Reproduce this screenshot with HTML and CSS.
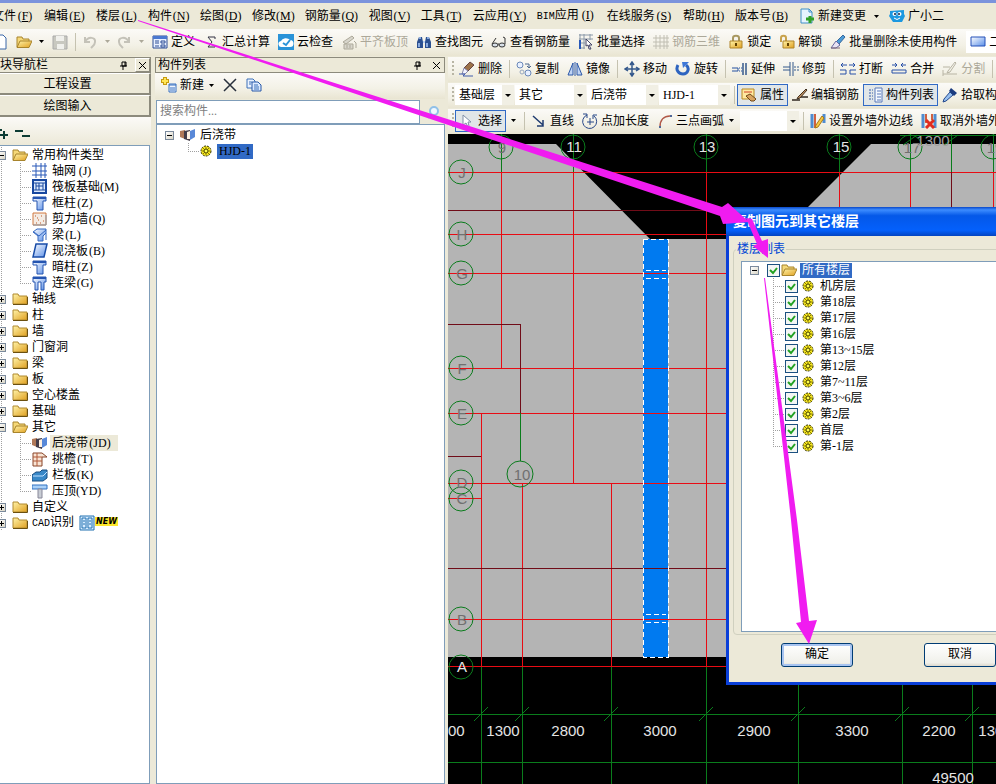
FILE: index.html
```html
<!DOCTYPE html>
<html lang="zh-CN">
<head>
    <meta charset="UTF-8">
    <meta name="viewport" content="width=device-width, initial-scale=1.0">
    <title>复制图元到其它楼层</title>
    <link rel="stylesheet" href="styles.css">
</head>
<body>
    <!-- icon set -->
    <svg class="sprite" aria-hidden="true">
        <defs>
            <linearGradient id="gold" x1="0" y1="0" x2="1" y2="1"><stop offset="0" stop-color="#fff3a8"/><stop offset="1" stop-color="#e0a020"/></linearGradient>
            <linearGradient id="steel" x1="0" y1="0" x2="1" y2="1"><stop offset="0" stop-color="#fff"/><stop offset="1" stop-color="#5a8fe8"/></linearGradient>
        </defs>
        <symbol id="i-doc" viewBox="0 0 16 16"><path d="M3 1h8l3 3v11H3z" fill="#fff" stroke="#3a66a8"/></symbol>
        <symbol id="i-open" viewBox="0 0 16 16"><path d="M1 13V3h5l1 2h6v3" fill="#f5d878" stroke="#a8842c"/><path d="M1 13.500L4 7h12l-3 6.500z" fill="url(#gold)" stroke="#a8842c"/></symbol>
        <symbol id="i-folder" viewBox="0 0 16 16"><path d="M1 13V3h5l1 2h8v8z" fill="url(#gold)" stroke="#b08a30"/><path d="M1 13.500h14.500V6" fill="none" stroke="#6b5010"/></symbol>
        <symbol id="i-save" viewBox="0 0 16 16"><path d="M1 2h14v13H1z" fill="#c8c8c0" stroke="#aaa"/><path d="M4 2h8v5H4zM5 10h7v5H5z" fill="#f0f0ec"/></symbol>
        <symbol id="i-undo" viewBox="0 0 16 16"><path d="M3 3v5h5M3 8c3-6 11-5 10 0c0 3-2 4-4 6" fill="none" stroke="#c4c2b8" stroke-width="2"/></symbol>
        <symbol id="i-redo" viewBox="0 0 16 16"><path d="M13 3v5H8M13 8C10 2 2 3 3 8c0 3 2 4 4 6" fill="none" stroke="#c4c2b8" stroke-width="2"/></symbol>
        <symbol id="i-define" viewBox="0 0 16 16"><path d="M1 2h14v12H1z" fill="#e8f0ff" stroke="#2c4c94"/><path d="M1 2h14v3H1z" fill="#4a78d0"/><path d="M3 7h4M3 9h4M3 12h4M9 7h4v2H9zM9 11h4v2H9z" fill="none" stroke="#2c4c94"/></symbol>
        <symbol id="i-sum" viewBox="0 0 16 16"><path d="M12 5V3H5l4 5l-4 5h7v-2" fill="none" stroke="#334"/></symbol>
        <symbol id="i-cloud" viewBox="0 0 16 16"><path d="M0 0h16v16H0z" fill="#2a93d8"/><path d="M4 13a3 3 0 0 1-1-6a5 4 0 0 1 9-1a3.500 3.500 0 0 1 0 7z" fill="#fff"/><path d="M5 9l3 2l4-5" fill="none" stroke="#2a93d8" stroke-width="2"/></symbol>
        <symbol id="i-flat" viewBox="0 0 16 16"><path d="M2 8l9-6l2 2l-8 6zM3 10h9v5H3z" fill="#d8d6cc" stroke="#aca899"/><path d="M6 11v3M9 11v3M13 7l2 2v5" stroke="#aca899" fill="none"/></symbol>
        <symbol id="i-find" viewBox="0 0 16 16"><path d="M1 14V8l2-5h3l1 5v6zM9 14V8l1-5h3l2 5v6z" fill="#2c5090"/><path d="M3 4h2M11 4h2M7 8h2M3 9v4M11 9v4" stroke="#a8c8f8" stroke-width="1.500"/></symbol>
        <symbol id="i-glasses" viewBox="0 0 16 16"><ellipse cx="4" cy="11" rx="3" ry="2" fill="#d8e0e8" stroke="#333"/><ellipse cx="11" cy="11" rx="3" ry="2" fill="#d8e0e8" stroke="#333"/><path d="M7 10h1M1 10l4-6M14 10V4l-2-1" fill="none" stroke="#333"/></symbol>
        <symbol id="i-batch" viewBox="0 0 16 16"><path d="M1 1h14M1 5h14M1 9h6M1 14h6M2 0v15M6 0v15M12 0v6" stroke="#8a98a8" fill="none"/><path d="M2 6v9" stroke="#2858b8" stroke-width="2"/><path d="M8 5l6 6h-3l2 4h-2l-1-4l-2 1z" fill="#fff" stroke="#446"/></symbol>
        <symbol id="i-rebar3d" viewBox="0 0 16 16"><path d="M0 4h16M0 8h16M0 12h16M3 1v14M7 1v14M11 1v14M14 1v14" stroke="#c0beb2" fill="none"/></symbol>
        <symbol id="i-lock" viewBox="0 0 16 16"><path d="M5 8V4c0-3 6-3 6 0v4" fill="none" stroke="#a89860" stroke-width="2"/><path d="M2 7h12v7H2z" fill="url(#gold)" stroke="#b08428"/><path d="M8 9v3" stroke="#604000" stroke-width="2"/></symbol>
        <symbol id="i-unlock" viewBox="0 0 16 16"><path d="M2 8V4c0-3 5-3 5 0v4" fill="none" stroke="#c8a24c" stroke-width="2"/><path d="M4 7h11v7H4z" fill="url(#gold)" stroke="#b08428"/><path d="M9 9v3" stroke="#604000" stroke-width="2"/></symbol>
        <symbol id="i-brush" viewBox="0 0 16 16"><path d="M13 1l2 2l-6 7l-3-2z" fill="#4c9cd8" stroke="#38689c"/><path d="M6 7l4 4l-4 3H1z" fill="#e8e4f4" stroke="#6868a0"/><path d="M1 14h9" stroke="#806878"/></symbol>
        <symbol id="i-eraser" viewBox="0 0 16 16"><path d="M11 1l4 3l-6 6l-4-3z" fill="#9c7248" stroke="#644"/><path d="M5 7l4 3l-3 3H3z" fill="#f4f4ff" stroke="#88a"/><path d="M0 13h6l-2 2h10" stroke="#405cac" fill="none"/></symbol>
        <symbol id="i-2d" viewBox="0 0 16 16"><path d="M1 3h14v9H1z" fill="url(#steel)" stroke="#2450b8"/></symbol>
        <symbol id="i-change" viewBox="0 0 16 16"><path d="M2 1h8l3 3v11H2z" fill="#e6f4ff" stroke="#4090c8"/><path d="M10 1v3h3" fill="none" stroke="#4090c8"/><path d="M11 8v7M7 11h8" stroke="#30a028" stroke-width="3"/></symbol>
        <symbol id="i-mascot" viewBox="0 0 16 16"><path d="M1 3l14-1v4l1 2l-3 6H4L0 8l1-2z" fill="#1c98e0"/><circle cx="5.500" cy="6" r="2" fill="#fff"/><circle cx="10.500" cy="6" r="2" fill="#fff"/><circle cx="6" cy="6" r="1" fill="#124"/><circle cx="10" cy="6" r="1" fill="#124"/><path d="M5 10q3 3 6 0" fill="none" stroke="#fff"/></symbol>
        <symbol id="i-copy" viewBox="0 0 16 16"><circle cx="4" cy="4" r="3" fill="#e8f0ff" stroke="#6a88b8"/><circle cx="12" cy="12" r="3" fill="#e8f0ff" stroke="#6a88b8"/><circle cx="6" cy="11" r="2" fill="none" stroke="#98a8c0"/><path d="M9 3h4v4M11 5l2 2l2-2" fill="none" stroke="#4c6890"/></symbol>
        <symbol id="i-mirror" viewBox="0 0 16 16"><path d="M6 2v12H1zM10 2v12h5z" fill="#c0d4f4" stroke="#2c58a8"/><path d="M8 1v14" stroke="#2c58a8"/></symbol>
        <symbol id="i-move" viewBox="0 0 16 16"><path d="M8 2v12M2 8h12M6 4l2-3l2 3M6 12l2 3l2-3M4 6L1 8l3 2M12 6l3 2l-3 2" fill="none" stroke="#34588c" stroke-width="1.500"/></symbol>
        <symbol id="i-rotate" viewBox="0 0 16 16"><path d="M3 4c-3 5 1 9 5 9c5 0 7-6 3-9" fill="none" stroke="#2e64c0" stroke-width="3"/><path d="M7 1h7L8 7z" fill="#3e78d8"/></symbol>
        <symbol id="i-extend" viewBox="0 0 16 16"><path d="M0 7h6v3H0" fill="none" stroke="#2450a0"/><path d="M7 7h4M7 10h4" stroke="#2450a0" stroke-dasharray="1 1"/><path d="M11 2v12M14 2v12" stroke="#34588c" stroke-width="1.500"/></symbol>
        <symbol id="i-trim" viewBox="0 0 16 16"><path d="M0 6h7M0 9h7M7 1v14M10 1v14" stroke="#34588c"/><path d="M11 6h5M11 9h5" stroke="#34588c" stroke-dasharray="2 1"/></symbol>
        <symbol id="i-break" viewBox="0 0 16 16"><path d="M1 4h6M9 4h6M3 2L1 4l2 2M13 2l2 2l-2 2M0 9h6v4H0M16 9h-6v4h6" fill="none" stroke="#2850a8"/></symbol>
        <symbol id="i-merge" viewBox="0 0 16 16"><path d="M1 4h5M10 4h5M4 2l2 2l-2 2M12 2l-2 2l2 2M1 9h14v3H1z" fill="none" stroke="#2850a8"/></symbol>
        <symbol id="i-split" viewBox="0 0 16 16"><path d="M1 6h7M1 13h14M1 9v6M13 1L6 10l-1 2l3-1l6-9z" fill="none" stroke="#b8b4a4"/></symbol>
        <symbol id="i-prop" viewBox="0 0 16 16"><path d="M1 2h12v10H1z" fill="#ffe9a0" stroke="#b88820"/><path d="M3 5h8" stroke="#d04028"/><path d="M5 9l4-2l6 5l-2 2h-3z" fill="#d8a460" stroke="#704818"/></symbol>
        <symbol id="i-rebar" viewBox="0 0 16 16"><path d="M0 13h8M6 10h10" stroke="#302820" stroke-width="1.500"/><path d="M14 2L6 10l-1 2l3-1l7-8z" fill="#c09060" stroke="#403020"/></symbol>
        <symbol id="i-list" viewBox="0 0 16 16"><path d="M2 3h4M2 6h4M2 9h4M2 12h4" stroke="#345cac" stroke-dasharray="2 1"/><path d="M8 1h7v14H8z" fill="#f4f8ff" stroke="#5878b8"/><path d="M10 4h4M10 7h4M10 10h4M10 13h4" stroke="#5878b8"/></symbol>
        <symbol id="i-pick" viewBox="0 0 16 16"><path d="M9 1l6 5l-3 3l-5-5z" fill="#1c3c80"/><path d="M8 5l3 3l-7 6l-3 1l1-3z" fill="#98c0f0" stroke="#24488c"/></symbol>
        <symbol id="i-select" viewBox="0 0 16 16"><path d="M4 2v10l3-2l2 4l1-1l-1-4h3z" fill="#fff" stroke="#8090a8"/></symbol>
        <symbol id="i-line" viewBox="0 0 16 16"><path d="M2 3l10 9M12 7v6H6" fill="none" stroke="#203c70" stroke-width="1.500"/></symbol>
        <symbol id="i-point" viewBox="0 0 16 16"><path d="M5 2A7 7 0 1 0 12 3M8 5v7M5 9h7M1 1h4v4M15 2h-4v4" fill="none" stroke="#284888"/></symbol>
        <symbol id="i-arc" viewBox="0 0 16 16"><path d="M3 14C3 7 7 3 13 3" fill="none" stroke="#b05848" stroke-width="1.500"/><path d="M2 13h2v2H2zM13 2h2v2h-2z" fill="#506898"/></symbol>
        <symbol id="i-wallset" viewBox="0 0 16 16"><path d="M2 1v14M14 1v9" stroke="#508cd0" stroke-width="3"/><path d="M5 1v14" stroke="#d06040" stroke-width="2"/><path d="M6 12l6-9l2 2l-6 9l-3 1z" fill="#f8c840" stroke="#a87818"/></symbol>
        <symbol id="i-walldel" viewBox="0 0 16 16"><path d="M2 1v14M14 1v14" stroke="#508cd0" stroke-width="3"/><path d="M5 1v9M11 1v6" stroke="#d06040" stroke-width="2"/><path d="M5 7l8 8M13 7l-8 8" stroke="#e02c20" stroke-width="3"/></symbol>
        <symbol id="i-new" viewBox="0 0 16 16"><path d="M4 0v8M0 4h8" stroke="#c89c10" stroke-width="4"/><path d="M4 1v6M1 4h6" stroke="#ffe658" stroke-width="2"/><path d="M8 7h7v8H8z" fill="#f0f6ff" stroke="#3870c0"/><path d="M8 8h7M9 11h5M9 13h5" stroke="#3870c0"/></symbol>
        <symbol id="i-delete" viewBox="0 0 16 16"><path d="M2 2l12 12M14 2L2 14" stroke="#28303c" stroke-width="1.500"/></symbol>
        <symbol id="i-dup" viewBox="0 0 16 16"><path d="M1 2h6l2 2v7H1z" fill="#eaf2ff" stroke="#3c70b8"/><path d="M6 5h6l3 3v6H6z" fill="#dceaff" stroke="#2858a8"/><path d="M8 8h4M8 10h5M8 12h5M3 5h3M3 7h2" stroke="#3c70b8"/></symbol>
        <symbol id="i-axis" viewBox="0 0 16 16"><path d="M0 3h15M0 8h15M0 12h15M4 0v15M9 0v15M13 0v15" stroke="#2858b8"/></symbol>
        <symbol id="i-raft" viewBox="0 0 16 16"><path d="M1 1h13v13H1z" fill="#dce9fc" stroke="#1848a0" stroke-width="2"/><path d="M4 4h7v7H4zM4 7h7M7 4v7M1 4h3M1 11h3M11 4h3M11 11h3" fill="none" stroke="#1848a0"/></symbol>
        <symbol id="i-column" viewBox="0 0 16 16"><path d="M1 2h13v4h-3v9H5V6H1z" fill="url(#steel)" stroke="#2454b0"/><path d="M1 3h13" stroke="#2454b0" stroke-width="2"/></symbol>
        <symbol id="i-shear" viewBox="0 0 16 16"><path d="M1 2h13v12H1z" fill="#f4ece4" stroke="#d07840"/><path d="M3 5h1M6 9h1M9 5h1M11 10h1M4 12h1M8 12h1M5 7h1" stroke="#c05828"/><path d="M1 14h13V4" fill="none" stroke="#8898a8"/></symbol>
        <symbol id="i-beam" viewBox="0 0 16 16"><path d="M1 5l4-3h9v4l-3 3v5H6V9z" fill="url(#steel)" stroke="#3468c0"/><path d="M2 5l5 4l7-6M11 9l3-3v7" fill="none" stroke="#3468c0"/></symbol>
        <symbol id="i-slab" viewBox="0 0 16 16"><path d="M4 1h11l-3 13H1z" fill="url(#steel)" stroke="#184ca8" stroke-width="1.500"/></symbol>
        <symbol id="i-link" viewBox="0 0 16 16"><path d="M1 2h13v5h-2v8H9V7H6v8H3V7H1z" fill="url(#steel)" stroke="#2454b0"/><path d="M1 3h13" stroke="#2454b0" stroke-width="2"/></symbol>
        <symbol id="i-strip" viewBox="0 0 16 16"><path d="M0 4l5-1v9l-5-2z" fill="#b07858"/><path d="M4 4l6-1v11l-6-2z" fill="#443c48"/><path d="M7 5l3-1v8H7z" fill="#fff0e0"/><path d="M10 4l5-2v8l-5 3z" fill="#5888d8"/></symbol>
        <symbol id="i-eave" viewBox="0 0 16 16"><path d="M1 2h9l5 4h-5v9H1z" fill="#f8e4d4" stroke="#884428"/><path d="M1 6h9M1 10h9M5 2v13" stroke="#b05838"/></symbol>
        <symbol id="i-rail" viewBox="0 0 16 16"><path d="M0 8l4-3h4l2-2h5v8l-4 3H0z" fill="#3888c8" stroke="#184c80"/><path d="M1 9h10l4-4" fill="none" stroke="#c0e0ff"/></symbol>
        <symbol id="i-cap" viewBox="0 0 16 16"><path d="M0 2h15v4H0z" fill="#a8d0f8" stroke="#3070c0"/><path d="M6 6h4v9H6z" fill="#c8ccd4" stroke="#889"/></symbol>
        <symbol id="i-cad" viewBox="0 0 16 16"><path d="M1 1h14v14H1z" fill="#d8ecff" stroke="#2070b0"/><path d="M3 3h4v10H3zM9 3h4v10H9zM4 6h2M4 9h2M10 6h2M10 9h2" fill="none" stroke="#2070b0"/></symbol>
        <symbol id="i-gear" viewBox="0 0 12 12"><circle cx="6" cy="6" r="5" fill="#f8e820" stroke="#2c2a00" stroke-dasharray="2 1"/><path d="M2 6h8M6 2v8M3 3l6 6M9 3L3 9" stroke="#8c8200"/><circle cx="6" cy="6" r="2" fill="#ffff50" stroke="#4c4600"/></symbol>
        <symbol id="i-search" viewBox="0 0 16 16"><circle cx="8" cy="7" r="4" fill="#f0f8ff" stroke="#90c0e8" stroke-width="2"/><path d="M5 10l-3 4" stroke="#90c0e8" stroke-width="2"/></symbol>
        <symbol id="i-pin" viewBox="0 0 9 9"><path d="M3 1h4v4H3zM1 5h7M4 5v4M6 1v4" fill="none" stroke="#000"/></symbol>
        <symbol id="i-close" viewBox="0 0 9 9"><path d="M1 1l7 7M8 1L1 8" stroke="#000"/></symbol>
        <symbol id="i-arrow" viewBox="0 0 5 3"><path d="M0 0h5L2.500 3z"/></symbol>
    </svg>

    <nav class="menubar">
        <a href="#">文件<span class="key">(<u>F</u>)</span></a>
        <a href="#">编辑<span class="key">(<u>E</u>)</span></a>
        <a href="#">楼层<span class="key">(<u>L</u>)</span></a>
        <a href="#">构件<span class="key">(<u>N</u>)</span></a>
        <a href="#">绘图<span class="key">(<u>D</u>)</span></a>
        <a href="#">修改<span class="key">(<u>M</u>)</span></a>
        <a href="#">钢筋量<span class="key">(<u>Q</u>)</span></a>
        <a href="#">视图<span class="key">(<u>V</u>)</span></a>
        <a href="#">工具<span class="key">(<u>T</u>)</span></a>
        <a href="#">云应用<span class="key">(<u>Y</u>)</span></a>
        <a href="#"><span class="latin">BIM</span>应用<span class="key">(<u>I</u>)</span></a>
        <a href="#">在线服务<span class="key">(<u>S</u>)</span></a>
        <a href="#">帮助<span class="key">(<u>H</u>)</span></a>
        <a href="#">版本号<span class="key">(<u>B</u>)</span></a>
        <a href="#" class="with-icon"><svg class="icon"><use href="#i-change"/></svg>新建变更<svg class="arrow"><use href="#i-arrow"/></svg></a>
        <a href="#" class="with-icon"><svg class="icon"><use href="#i-mascot"/></svg>广小二</a>
    </nav>

    <div class="toolbar main-toolbar">
        <div class="file-tools">
            <button class="tool" aria-label="新建"><svg class="icon"><use href="#i-doc"/></svg></button>
            <button class="tool" aria-label="打开"><svg class="icon"><use href="#i-open"/></svg><svg class="arrow"><use href="#i-arrow"/></svg></button>
            <button class="tool" aria-label="保存"><svg class="icon"><use href="#i-save"/></svg></button>
            <span class="sep"></span>
            <button class="tool off" aria-label="撤销"><svg class="icon"><use href="#i-undo"/></svg><svg class="arrow"><use href="#i-arrow"/></svg></button>
            <button class="tool off" aria-label="恢复"><svg class="icon"><use href="#i-redo"/></svg><svg class="arrow"><use href="#i-arrow"/></svg></button>
        </div>
        <button class="tool"><svg class="icon"><use href="#i-define"/></svg>定义</button>
        <button class="tool"><svg class="icon"><use href="#i-sum"/></svg>汇总计算</button>
        <button class="tool"><svg class="icon"><use href="#i-cloud"/></svg>云检查</button>
        <button class="tool off"><svg class="icon"><use href="#i-flat"/></svg>平齐板顶</button>
        <button class="tool"><svg class="icon"><use href="#i-find"/></svg>查找图元</button>
        <button class="tool"><svg class="icon"><use href="#i-glasses"/></svg>查看钢筋量</button>
        <button class="tool"><svg class="icon"><use href="#i-batch"/></svg>批量选择</button>
        <button class="tool off"><svg class="icon"><use href="#i-rebar3d"/></svg>钢筋三维</button>
        <button class="tool"><svg class="icon"><use href="#i-lock"/></svg>锁定</button>
        <button class="tool"><svg class="icon"><use href="#i-unlock"/></svg>解锁</button>
        <button class="tool"><svg class="icon"><use href="#i-brush"/></svg>批量删除未使用构件</button>
        <div class="view-tools">
            <button class="tool"><svg class="icon"><use href="#i-2d"/></svg>二维</button>
        </div>
    </div>

    <div class="workspace">
        <aside class="nav-panel">
            <header class="panel-title">
                <span>模块导航栏</span>
                <button class="mini" aria-label="固定"><svg><use href="#i-pin"/></svg></button>
                <button class="mini boxed" aria-label="关闭"><svg><use href="#i-close"/></svg></button>
            </header>
            <button class="nav-button">工程设置</button>
            <button class="nav-button">绘图输入</button>
            <div class="fold-tools">
                <button class="mini" aria-label="全部展开"><svg class="fold" viewBox="0 0 12 12"><path d="M0 3h5M7 4v8M3 8h8" stroke="#0c3c34" stroke-width="2"/></svg></button>
                <button class="mini" aria-label="全部折叠"><svg class="fold-wide" viewBox="0 0 18 12"><path d="M1 4h8M8 9h8" stroke="#0c3c34" stroke-width="2"/></svg></button>
            </div>
            <ul class="tree nav-tree">
                <li>
                    <div class="row"><button class="expander minus" aria-label="折叠"></button><svg class="icon"><use href="#i-open"/></svg><span class="label">常用构件类型</span></div>
                    <ul>
                        <li class="row"><svg class="icon"><use href="#i-axis"/></svg><span class="label">轴网<span class="key">(J)</span></span></li>
                        <li class="row"><svg class="icon"><use href="#i-raft"/></svg><span class="label">筏板基础<span class="key">(M)</span></span></li>
                        <li class="row"><svg class="icon"><use href="#i-column"/></svg><span class="label">框柱<span class="key">(Z)</span></span></li>
                        <li class="row"><svg class="icon"><use href="#i-shear"/></svg><span class="label">剪力墙<span class="key">(Q)</span></span></li>
                        <li class="row"><svg class="icon"><use href="#i-beam"/></svg><span class="label">梁<span class="key">(L)</span></span></li>
                        <li class="row"><svg class="icon"><use href="#i-slab"/></svg><span class="label">现浇板<span class="key">(B)</span></span></li>
                        <li class="row"><svg class="icon"><use href="#i-column"/></svg><span class="label">暗柱<span class="key">(Z)</span></span></li>
                        <li class="row"><svg class="icon"><use href="#i-link"/></svg><span class="label">连梁<span class="key">(G)</span></span></li>
                    </ul>
                </li>
                <li><div class="row"><button class="expander" aria-label="展开"></button><svg class="icon"><use href="#i-folder"/></svg><span class="label">轴线</span></div></li>
                <li><div class="row"><button class="expander" aria-label="展开"></button><svg class="icon"><use href="#i-folder"/></svg><span class="label">柱</span></div></li>
                <li><div class="row"><button class="expander" aria-label="展开"></button><svg class="icon"><use href="#i-folder"/></svg><span class="label">墙</span></div></li>
                <li><div class="row"><button class="expander" aria-label="展开"></button><svg class="icon"><use href="#i-folder"/></svg><span class="label">门窗洞</span></div></li>
                <li><div class="row"><button class="expander" aria-label="展开"></button><svg class="icon"><use href="#i-folder"/></svg><span class="label">梁</span></div></li>
                <li><div class="row"><button class="expander" aria-label="展开"></button><svg class="icon"><use href="#i-folder"/></svg><span class="label">板</span></div></li>
                <li><div class="row"><button class="expander" aria-label="展开"></button><svg class="icon"><use href="#i-folder"/></svg><span class="label">空心楼盖</span></div></li>
                <li><div class="row"><button class="expander" aria-label="展开"></button><svg class="icon"><use href="#i-folder"/></svg><span class="label">基础</span></div></li>
                <li>
                    <div class="row"><button class="expander minus" aria-label="折叠"></button><svg class="icon"><use href="#i-open"/></svg><span class="label">其它</span></div>
                    <ul>
                        <li class="row"><svg class="icon"><use href="#i-strip"/></svg><span class="label current">后浇带<span class="key two">(JD)</span></span></li>
                        <li class="row"><svg class="icon"><use href="#i-eave"/></svg><span class="label">挑檐<span class="key">(T)</span></span></li>
                        <li class="row"><svg class="icon"><use href="#i-rail"/></svg><span class="label">栏板<span class="key">(K)</span></span></li>
                        <li class="row"><svg class="icon"><use href="#i-cap"/></svg><span class="label">压顶<span class="key two">(YD)</span></span></li>
                    </ul>
                </li>
                <li><div class="row"><button class="expander" aria-label="展开"></button><svg class="icon"><use href="#i-folder"/></svg><span class="label">自定义</span></div></li>
                <li><div class="row"><button class="expander" aria-label="展开"></button><svg class="icon"><use href="#i-folder"/></svg><span class="label"><span class="latin">CAD</span>识别</span><svg class="icon cad"><use href="#i-cad"/></svg><em class="new">NEW</em></div></li>
            </ul>
        </aside>

        <section class="list-panel">
            <header class="panel-title">
                <span>构件列表</span>
                <button class="mini" aria-label="固定"><svg><use href="#i-pin"/></svg></button>
                <button class="mini" aria-label="关闭"><svg><use href="#i-close"/></svg></button>
            </header>
            <div class="toolbar list-tools">
                <button class="tool"><svg class="icon"><use href="#i-new"/></svg>新建<svg class="arrow"><use href="#i-arrow"/></svg></button>
                <button class="tool" aria-label="删除"><svg class="icon"><use href="#i-delete"/></svg></button>
                <button class="tool" aria-label="复制"><svg class="icon"><use href="#i-dup"/></svg></button>
            </div>
            <form class="search">
                <input type="text" placeholder="搜索构件..." aria-label="搜索构件">
                <button type="button" class="mini" aria-label="搜索"><svg class="icon"><use href="#i-search"/></svg></button>
            </form>
            <ul class="tree list-tree">
                <li>
                    <div class="row"><button class="expander minus" aria-label="折叠"></button><svg class="icon"><use href="#i-strip"/></svg><span class="label">后浇带</span></div>
                    <ul>
                        <li class="row"><svg class="gear"><use href="#i-gear"/></svg><span class="label selected dark">HJD-1</span></li>
                    </ul>
                </li>
            </ul>
        </section>

        <main class="editor">
            <div class="toolbar">
                <span class="grip"></span>
                <button class="tool"><svg class="icon"><use href="#i-eraser"/></svg>删除</button>
                <span class="sep"></span>
                <button class="tool"><svg class="icon"><use href="#i-copy"/></svg>复制</button>
                <button class="tool"><svg class="icon"><use href="#i-mirror"/></svg>镜像</button>
                <span class="sep"></span>
                <button class="tool"><svg class="icon"><use href="#i-move"/></svg>移动</button>
                <button class="tool"><svg class="icon"><use href="#i-rotate"/></svg>旋转</button>
                <span class="sep"></span>
                <button class="tool"><svg class="icon"><use href="#i-extend"/></svg>延伸</button>
                <button class="tool"><svg class="icon"><use href="#i-trim"/></svg>修剪</button>
                <span class="sep"></span>
                <button class="tool"><svg class="icon"><use href="#i-break"/></svg>打断</button>
                <button class="tool"><svg class="icon"><use href="#i-merge"/></svg>合并</button>
                <button class="tool off"><svg class="icon"><use href="#i-split"/></svg>分割</button>
                <span class="sep"></span>
            </div>
            <div class="toolbar">
                <span class="grip"></span>
                <select class="combo floor" aria-label="楼层"><option>基础层</option></select>
                <select class="combo" aria-label="构件类别"><option>其它</option></select>
                <select class="combo" aria-label="构件类型"><option>后浇带</option></select>
                <select class="combo" aria-label="构件"><option>HJD-1</option></select>
                <span class="sep"></span>
                <button class="tool pressed"><svg class="icon"><use href="#i-prop"/></svg>属性</button>
                <button class="tool"><svg class="icon"><use href="#i-rebar"/></svg>编辑钢筋</button>
                <button class="tool pressed"><svg class="icon"><use href="#i-list"/></svg>构件列表</button>
                <button class="tool"><svg class="icon"><use href="#i-pick"/></svg>拾取构件</button>
            </div>
            <div class="toolbar draw-tools">
                <span class="grip"></span>
                <button class="tool pressed"><svg class="icon"><use href="#i-select"/></svg>选择</button>
                <button class="tool drop" aria-label="选择方式"><svg class="arrow"><use href="#i-arrow"/></svg></button>
                <span class="sep"></span>
                <button class="tool"><svg class="icon"><use href="#i-line"/></svg>直线</button>
                <button class="tool"><svg class="icon"><use href="#i-point"/></svg>点加长度</button>
                <button class="tool"><svg class="icon"><use href="#i-arc"/></svg>三点画弧<svg class="arrow"><use href="#i-arrow"/></svg></button>
                <select class="combo floor" aria-label="画法"><option></option></select>
                <span class="sep"></span>
                <button class="tool"><svg class="icon"><use href="#i-wallset"/></svg>设置外墙外边线</button>
                <button class="tool"><svg class="icon"><use href="#i-walldel"/></svg>取消外墙外边线</button>
            </div>

            <div class="drawing">
                <svg class="plan" viewBox="448 134 548 650" preserveAspectRatio="xMinYMin slice">
                    <path class="floor-slab" d="M448 144H556L650 239H776L871 144H1600V657H448Z"/>
                    <path class="strip" d="M643 239h25v418h-25z"/>
                    <path class="axis" d="M448 172H1600M448 234H1600M448 273H1600M448 368H1600M448 413H1600M448 483H1600M448 498H481M448 619H1600M448 666H1600"/>
                    <path class="axis" d="M501 157V368M573 157V483M706 157V666M839 157V666M910 157V666M993 157V666M481 413V666M522 483V666M611 483V666"/>
                    <path class="axis dark" d="M448 210H1600M448 324H520V413M448 456H481M448 568H1600M951 157V666"/>
                    <path class="strip-edge" d="M643 239h25v418h-25zM646 270h20M646 278h20M646 614h20M646 622h20"/>
                    <path class="dim" d="M448 714H1600M448 762H1600M481 667V784M522 667V784M611 667V784M706 667V784M798 667V784M902 667V784M972 667V784"/>
                    <path class="dim" d="M501 134V172M573 134V172M706 134V172M839 134V172M910 134V172M951 134V172M993 134V172M520 413V461M900 135H1600"/>
                    <path class="tick" d="M474 721l14-14M515 721l14-14M604 721l14-14M699 721l14-14M791 721l14-14M895 721l14-14M965 721l14-14M903 145l14-10M944 145l14-10"/>
                    <g class="bubble">
                        <circle cx="461" cy="172" r="12"/><circle cx="461" cy="234" r="12"/><circle cx="461" cy="273" r="12"/>
                        <circle cx="461" cy="368" r="12"/><circle cx="461" cy="413" r="12"/><circle cx="461" cy="482" r="12"/>
                        <circle cx="461" cy="499" r="12"/><circle cx="461" cy="619" r="12"/><circle cx="461" cy="667" r="12"/>
                        <circle cx="501" cy="147" r="12"/><circle cx="573" cy="147" r="12"/><circle cx="706" cy="147" r="12"/>
                        <circle cx="839" cy="147" r="12"/><circle cx="910" cy="147" r="12"/><circle cx="993" cy="147" r="12"/>
                        <circle cx="520" cy="474" r="13"/>
                    </g>
                    <g class="axis-name">
                        <text x="462" y="178">J</text><text x="462" y="240">H</text><text x="462" y="279">G</text>
                        <text x="462" y="374">F</text><text x="462" y="419">E</text><text x="462" y="488">D</text>
                        <text x="462" y="504">C</text><text x="462" y="625">B</text><text x="502" y="153">9</text>
                        <text x="522" y="480">10</text><text x="912" y="153">17</text><text x="995" y="153">19</text>
                        <text class="light" x="933" y="146">1300</text>
                    </g>
                    <g class="dim-text">
                        <text x="462" y="672">A</text><text x="574" y="152">11</text><text x="707" y="152">13</text><text x="841" y="152">15</text>
                        <text x="448" y="736">3300</text><text x="503" y="736">1300</text><text x="568" y="736">2800</text>
                        <text x="660" y="736">3000</text><text x="754" y="736">2900</text><text x="852" y="736">3300</text>
                        <text x="939" y="736">2200</text><text x="995" y="736">1300</text><text x="953" y="783">49500</text>
                    </g>
                </svg>

                <div class="dialog" role="dialog" aria-labelledby="dialogTitle">
                    <h2 id="dialogTitle">复制图元到其它楼层</h2>
                    <fieldset>
                        <legend>楼层列表</legend>
                        <ul class="tree floor-tree">
                            <li>
                                <div class="row"><button class="expander minus" aria-label="折叠"></button><input type="checkbox" id="all" checked><svg class="icon"><use href="#i-open"/></svg><label class="label selected" for="all">所有楼层</label></div>
                                <ul>
                                    <li class="row"><input type="checkbox" id="f1" checked><svg class="gear"><use href="#i-gear"/></svg><label class="label" for="f1">机房层</label></li>
                                    <li class="row"><input type="checkbox" id="f2" checked><svg class="gear"><use href="#i-gear"/></svg><label class="label" for="f2">第18层</label></li>
                                    <li class="row"><input type="checkbox" id="f3" checked><svg class="gear"><use href="#i-gear"/></svg><label class="label" for="f3">第17层</label></li>
                                    <li class="row"><input type="checkbox" id="f4" checked><svg class="gear"><use href="#i-gear"/></svg><label class="label" for="f4">第16层</label></li>
                                    <li class="row"><input type="checkbox" id="f5" checked><svg class="gear"><use href="#i-gear"/></svg><label class="label" for="f5">第13~15层</label></li>
                                    <li class="row"><input type="checkbox" id="f6" checked><svg class="gear"><use href="#i-gear"/></svg><label class="label" for="f6">第12层</label></li>
                                    <li class="row"><input type="checkbox" id="f7" checked><svg class="gear"><use href="#i-gear"/></svg><label class="label" for="f7">第7~11层</label></li>
                                    <li class="row"><input type="checkbox" id="f8" checked><svg class="gear"><use href="#i-gear"/></svg><label class="label" for="f8">第3~6层</label></li>
                                    <li class="row"><input type="checkbox" id="f9" checked><svg class="gear"><use href="#i-gear"/></svg><label class="label" for="f9">第2层</label></li>
                                    <li class="row"><input type="checkbox" id="f10" checked><svg class="gear"><use href="#i-gear"/></svg><label class="label" for="f10">首层</label></li>
                                    <li class="row"><input type="checkbox" id="f11" checked><svg class="gear"><use href="#i-gear"/></svg><label class="label" for="f11">第-1层</label></li>
                                </ul>
                            </li>
                        </ul>
                    </fieldset>
                    <div class="dialog-buttons">
                        <button class="push default">确定</button>
                        <button class="push">取消</button>
                    </div>
                </div>
            </div>
        </main>
    </div>

    <!-- step arrows: menu, dialog, list, confirm -->
    <svg class="guide" viewBox="0 0 996 784" preserveAspectRatio="xMinYMin slice" aria-hidden="true">
        <path d="M138 20L722 207L728 203L749 222L723 224L720 216L138 21Z"/>
        <path d="M746 218L752 219L762 241L768 239L768 258L753 246L757 244Z"/>
        <path d="M764 278L765 278L797 520L809 621L817 620L809 644L796 623L801 622L791 520Z"/>
    </svg>
</body>
</html>
```

FILE: styles.css
```css
* {
    box-sizing: border-box;
}
body {
    display: flex;
    flex-direction: column;
    height: 100vh;
    margin: 0;
    overflow: hidden;
    position: relative;
    border-top: 3px solid #7b93dc;
    background: #ece9d8;
    color: #000;
    font: 12px/16px "Liberation Serif", "Noto Sans CJK SC", serif;
}
button, input, select {
    font: inherit;
    color: inherit;
}
ul {
    list-style: none;
    margin: 0;
    padding: 0;
}
svg {
    flex: none;
}
.sprite {
    position: absolute;
    width: 0;
    height: 0;
}
.icon {
    width: 16px;
    height: 16px;
}
.gear {
    width: 12px;
    height: 12px;
}
.arrow {
    width: 5px;
    height: 3px;
}
/* shortcut letters take the width of half-width glyphs */
.key {
    display: inline-block;
    min-width: 18px;
    text-align: center;
}
.key.two {
    min-width: 24px;
}
.latin {
    font-family: "Liberation Mono", monospace;
    font-size: 10px;
}

/* menu */
.menubar {
    display: flex;
    align-items: center;
    gap: 10px;
    height: 26px;
    margin-left: -8px;
    white-space: nowrap;
}
.menubar a {
    color: #000;
    text-decoration: none;
}
.menubar .with-icon {
    display: flex;
    align-items: center;
    gap: 3px;
}
.menubar .arrow {
    margin-left: 5px;
}

/* toolbars */
.toolbar {
    display: flex;
    align-items: center;
    height: 25px;
    padding-bottom: 2px;
    background: linear-gradient(#fbfaf7, #f3f1e6 60%, #e9e5d2);
    white-space: nowrap;
    overflow: hidden;
}
.tool {
    display: flex;
    flex: none;
    align-items: center;
    gap: 3px;
    height: 22px;
    padding: 0 4px;
    border: 0;
    background: none;
}
.tool.off {
    color: #aca899;
    fill: #aca899;
}
.tool.pressed {
    padding: 0 3px;
    border: 1px solid #316ac5;
    background: #e1e6e8;
}
.tool.drop {
    padding: 0 3px;
}
.sep {
    flex: none;
    width: 1px;
    height: 18px;
    margin: 0 2px 0 3px;
    background: #c5c2b0;
}
.grip {
    flex: none;
    width: 2px;
    height: 16px;
    margin: 0 1px 0 4px;
    background: repeating-linear-gradient(#b8b5a4 0 2px, transparent 2px 4px);
}
.main-toolbar {
    height: 27px;
}
.file-tools {
    display: flex;
    flex: none;
    align-items: center;
    width: 160px;
    margin-left: -12px;
}
.file-tools .arrow {
    margin-left: 4px;
}
.file-tools .tool.off {
    padding-right: 2px;
}
.view-tools {
    flex: 1;
    margin-left: 5px;
    background: #fff;
}
.combo {
    flex: none;
    appearance: none;
    width: 71px;
    height: 20px;
    margin-right: 1px;
    padding: 0 12px 0 4px;
    border: 0;
    border-radius: 0;
    background: #fff url("data:image/svg+xml,%3Csvg xmlns='http://www.w3.org/2000/svg' width='12' height='20'%3E%3Cpath d='M0 0h12v20H0z' fill='%23f1efe4'/%3E%3Cpath d='M3 9h6L6 12z'/%3E%3C/svg%3E") no-repeat right center;
}
.combo.floor {
    width: 59px;
}
.draw-tools .arrow {
    margin: 0 2px;
}

/* panels */
.workspace {
    display: flex;
    flex: 1;
    min-height: 0;
    padding-top: 1px;
}
.nav-panel {
    display: flex;
    flex: none;
    flex-direction: column;
    width: 166px;
    margin-left: -15px;
}
.list-panel {
    display: flex;
    flex: none;
    flex-direction: column;
    width: 290px;
    margin: 0 3px 0 4px;
}
.panel-title {
    display: flex;
    flex: none;
    align-items: center;
    gap: 4px;
    height: 16px;
    padding-left: 2px;
    border: 1px solid #8c8a7c;
}
.panel-title span {
    flex: 1;
}
.mini {
    display: flex;
    align-items: center;
    justify-content: center;
    min-width: 15px;
    height: 14px;
    padding: 0;
    border: 0;
    background: none;
}
.mini svg {
    width: 9px;
    height: 9px;
}
.mini.boxed {
    border: 1px solid #8c8a7c;
    border-top-color: #fff;
    border-left-color: #fff;
}
.nav-button {
    flex: none;
    height: 22px;
    padding: 0;
    border: 1px solid #fff;
    border-right: 2px solid #8c8a7c;
    border-bottom: 2px solid #8c8a7c;
    background: #ece9d8;
}
.fold-tools {
    display: flex;
    flex: none;
    align-items: center;
    gap: 4px;
    height: 28px;
    padding: 4px 0 0 10px;
    background: linear-gradient(#fbfaf7, #ece9d8);
}
.fold-tools .fold {
    width: 12px;
    height: 12px;
}
.fold-tools .fold-wide {
    width: 18px;
    height: 12px;
}
.list-tools {
    flex: none;
    height: 26px;
    padding-left: 2px;
}
.list-tools .arrow {
    margin-left: 2px;
}
.search {
    display: flex;
    flex: none;
    gap: 3px;
    height: 24px;
    margin-top: 1px;
}
.search input {
    flex: 1;
    min-width: 0;
    margin-left: 1px;
    padding: 0 3px 3px;
    border: 1px solid #7f9db9;
    background: #fff;
}
.search input::placeholder {
    color: #808080;
}
.search .mini {
    width: 22px;
    height: 24px;
}
.search .icon {
    width: 16px;
    height: 16px;
}

/* trees */
.tree {
    flex: 1;
    border: 1px solid #7f9db9;
    background: #fff;
    white-space: nowrap;
    overflow: hidden;
}
.nav-tree {
    padding: 1px 0 0 11px;
    margin-right: 1px;
}
.list-tree {
    padding: 2px 0 0 8px;
    margin-left: 1px;
}
.row {
    display: flex;
    align-items: center;
    height: 16px;
}
.tree ul {
    margin-left: 23px;
}
.tree ul .row {
    background: repeating-linear-gradient(#a0a0a0 0 1px, transparent 1px 2px) 0 0 / 1px 100% no-repeat;
}
.tree ul .row:last-child {
    background-size: 1px 50%;
}
.tree ul .row::before {
    content: "";
    width: 11px;
    height: 1px;
    margin-right: 1px;
    background: repeating-linear-gradient(90deg, #a0a0a0 0 1px, transparent 1px 2px);
}
.nav-tree > li {
    background: repeating-linear-gradient(#a0a0a0 0 1px, transparent 1px 2px) 4px 0 / 1px 100% no-repeat;
}
.expander {
    flex: none;
    width: 9px;
    height: 9px;
    margin-right: 6px;
    padding: 0;
    border: 1px solid #7b8a9c;
    background:
        linear-gradient(#000, #000) center / 5px 1px no-repeat,
        linear-gradient(#000, #000) center / 1px 5px no-repeat,
        linear-gradient(135deg, #fff, #d8d4c4);
}
.expander.minus {
    background:
        linear-gradient(#000, #000) center / 5px 1px no-repeat,
        linear-gradient(135deg, #fff, #d8d4c4);
}
.label {
    margin-left: 2px;
    padding: 0 2px;
}
.current {
    padding-right: 6px;
    background: #ece9d8;
}
.selected {
    line-height: 15px;
    background: #316ac5;
    color: #fff;
}
.selected.dark {
    margin-left: 5px;
    color: #000;
}
.cad {
    margin-left: 3px;
}
.new {
    padding: 0 1px;
    margin-bottom: 4px;
    font: italic bold 8px/9px "DejaVu Sans", sans-serif;
    background: #ffe82c;
}

/* drawing area */
.editor {
    display: flex;
    flex: 1;
    flex-direction: column;
    min-width: 0;
}
.editor .toolbar {
    flex: none;
    margin-bottom: 1px;
}
.editor .draw-tools {
    margin-bottom: 0;
}
.drawing {
    position: relative;
    flex: 1;
    min-height: 0;
    overflow: hidden;
    background: #000;
}
.plan {
    display: block;
    width: 100%;
    height: 100%;
}
.floor-slab {
    fill: #b4b4b4;
}
.strip {
    fill: #007af0;
}
.strip-edge {
    fill: none;
    stroke: #fff;
    stroke-dasharray: 5 3;
    shape-rendering: crispEdges;
}
.axis {
    fill: none;
    stroke: #e80c14;
    shape-rendering: crispEdges;
}
.axis.dark {
    stroke: #700c18;
}
.dim {
    fill: none;
    stroke: #0a7c1c;
    shape-rendering: crispEdges;
}
.tick, .bubble {
    fill: none;
    stroke: #0a7c1c;
}
.axis-name, .dim-text {
    font: 15px "Liberation Sans", sans-serif;
    text-anchor: middle;
    fill: #707070;
}
.dim-text {
    fill: #e4e4e4;
}
.axis-name .light {
    fill: #a0a0a0;
}

/* dialog */
.dialog {
    position: absolute;
    top: 73px;
    left: 278px;
    width: 300px;
    border: 3px solid #0a3fd8;
    border-top: 0;
    background: #ece9d8;
}
.dialog h2 {
    margin: 0 -3px;
    padding-left: 7px;
    font-size: 14px;
    line-height: 29px;
    color: #fff;
    background: linear-gradient(#0a48c8, #3c8cff 10%, #0458e8 30%, #0460fc 80%, #0444c0);
}
.dialog fieldset {
    margin: 5px 4px 0;
    padding: 4px 7px 2px;
    border: 1px solid #d0d0bf;
    border-radius: 4px;
}
.dialog legend {
    padding: 0 1px;
    margin-left: -5px;
    color: #0046d5;
}
.floor-tree {
    height: 371px;
    padding-left: 8px;
}
.floor-tree .expander {
    margin-right: 8px;
}
.floor-tree .selected {
    margin-left: 3px;
}
.floor-tree .gear {
    margin: 0 2px 0 3px;
}
.floor-tree ul {
    margin-left: 23px;
}
.tree input {
    flex: none;
    appearance: none;
    width: 13px;
    height: 13px;
    margin: 0 1px 0 0;
    border: 1px solid #1c5180;
    background: #f4f6f4;
}
.tree input:checked {
    background: #f4f6f4 url("data:image/svg+xml,%3Csvg xmlns='http://www.w3.org/2000/svg' width='11' height='11'%3E%3Cpath d='M2 5l3 3l4-5' fill='none' stroke='%2321a121' stroke-width='2'/%3E%3C/svg%3E") center no-repeat;
}
.dialog-buttons {
    display: flex;
    gap: 71px;
    padding: 8px 0 15px 52px;
}
.push {
    width: 72px;
    height: 24px;
    padding: 0 0 2px;
    border: 1px solid #003c74;
    border-radius: 3px;
    background: linear-gradient(#fff, #f0f0ea 85%, #dcd8cc);
}
.push.default {
    box-shadow: inset 0 0 0 2px #a8c4f0;
}

.guide {
    position: absolute;
    top: -3px;
    left: 0;
    width: 100vw;
    height: 100vh;
    pointer-events: none;
    fill: #f01cf0;
}
```
